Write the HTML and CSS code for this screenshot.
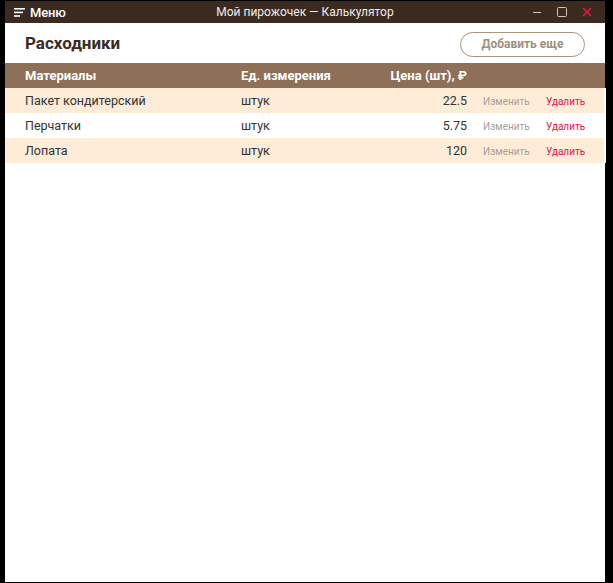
FILE: index.html
```html
<!DOCTYPE html>
<html lang="ru">
<head>
<meta charset="utf-8">
<title>Мой пирожочек — Калькулятор</title>
<link rel="stylesheet" href="styles.css">
</head>
<body>
<div class="window">
  <div class="titlebar">
    <div class="menu">
      <svg class="menu-icon" width="11" height="9" viewBox="0 0 11 9"><rect x="0" y="0" width="11" height="1.6" fill="#fff"/><rect x="0" y="3.6" width="9" height="1.6" fill="#fff"/><rect x="0" y="7.2" width="6" height="1.6" fill="#fff"/></svg>
      <span>Меню</span>
    </div>
    <div class="title">Мой пирожочек — Калькулятор</div>
    <div class="controls">
      <svg width="10" height="10" viewBox="0 0 10 10"><line x1="1" y1="5.5" x2="9" y2="5.5" stroke="#cfc6bd" stroke-width="1"/></svg>
      <svg width="10" height="10" viewBox="0 0 10 10"><rect x="0.5" y="0.5" width="9" height="9" rx="1" fill="none" stroke="#cfc6bd" stroke-width="1"/></svg>
      <svg width="10" height="10" viewBox="0 0 10 10"><path d="M1 1 L9 9 M9 1 L1 9" stroke="#e8174a" stroke-width="1.5"/></svg>
    </div>
  </div>
  <div class="content">
    <div class="head">
      <h1>Расходники</h1>
      <button class="add">Добавить еще</button>
    </div>
    <table class="grid">
      <colgroup><col class="w-name"><col class="w-unit"><col class="w-price"><col class="w-act"></colgroup>
      <thead>
        <tr><th class="c-name">Материалы</th><th class="c-unit">Ед. измерения</th><th class="c-price">Цена (шт), ₽</th><th class="c-act"></th></tr>
      </thead>
      <tbody>
        <tr class="odd"><td class="c-name">Пакет кондитерский</td><td class="c-unit">штук</td><td class="c-price">22.5</td><td class="c-act"><span class="edit">Изменить</span><span class="del">Удалить</span></td></tr>
        <tr><td class="c-name">Перчатки</td><td class="c-unit">штук</td><td class="c-price">5.75</td><td class="c-act"><span class="edit">Изменить</span><span class="del">Удалить</span></td></tr>
        <tr class="odd"><td class="c-name">Лопата</td><td class="c-unit">штук</td><td class="c-price">120</td><td class="c-act"><span class="edit">Изменить</span><span class="del">Удалить</span></td></tr>
      </tbody>
    </table>
  </div>
</div>
</body>
</html>
```
FILE: styles.css
```css
html, body {
  margin: 0;
  padding: 0;
  background: #000;
  height: 583px;
  overflow: hidden;
}
body {
  font-family: Roboto, "Noto Sans", sans-serif;
  padding: 1px 8px 1px 5px;
  box-sizing: border-box;
}
.window {
  width: 600px;
  height: 581px;
  background: #fff;
  display: flex;
  flex-direction: column;
}
.titlebar {
  height: 22px;
  background: #3b2a1f;
  display: flex;
  align-items: center;
  position: relative;
  color: #fff;
}
.menu {
  display: flex;
  align-items: center;
  padding-left: 9px;
  gap: 5px;
  font-size: 13px;
  font-weight: 500;
  letter-spacing: -0.2px;
}
.title {
  position: absolute;
  left: 0;
  right: 0;
  text-align: center;
  font-size: 12px;
  color: #eee;
  pointer-events: none;
}
.controls {
  margin-left: auto;
  display: flex;
  gap: 15px;
  padding-right: 13px;
}
.content {
  flex: 1;
  display: flex;
  flex-direction: column;
}
.head {
  height: 40px;
  display: flex;
  align-items: center;
  justify-content: space-between;
  padding: 0 20px 0 20px;
}
h1 {
  margin: 0;
  font-size: 17px;
  font-weight: 700;
  color: #3a2a20;
}
.add {
  width: 125px;
  height: 25px;
  border: 1px solid #a8957f;
  border-radius: 13px;
  background: #fff;
  color: #a09080;
  font-family: Roboto, sans-serif;
  font-size: 12px;
  font-weight: 700;
  padding: 0;
  margin-top: 2px;
}
.grid {
  border-collapse: collapse;
  width: 600px;
  table-layout: fixed;
}
.w-name { width: 236px; }
.w-unit { width: 140px; }
.w-price { width: 86px; }
.w-act { width: 138px; }
.grid th {
  height: 25px;
  background: #8e6f58;
  color: #fff;
  font-size: 13px;
  font-weight: 700;
  text-align: left;
  padding: 0;
  white-space: nowrap;
}
.grid td {
  height: 25px;
  padding: 0;
  font-size: 12.5px;
  color: #333;
  white-space: nowrap;
}
.grid tbody tr.odd td {
  background: #feecd6;
}
.grid tbody tr td:last-child {
  border-right: 2px solid #fff;
}
.grid .c-name { padding-left: 20px; }
.grid .c-price { text-align: right; }
.grid .c-act { padding-left: 16px; }
.edit {
  font-size: 10px;
  color: #a8a09a;
  display: inline-block;
  width: 63px;
}
.del {
  font-size: 10px;
  color: #e5124a;
}
```
